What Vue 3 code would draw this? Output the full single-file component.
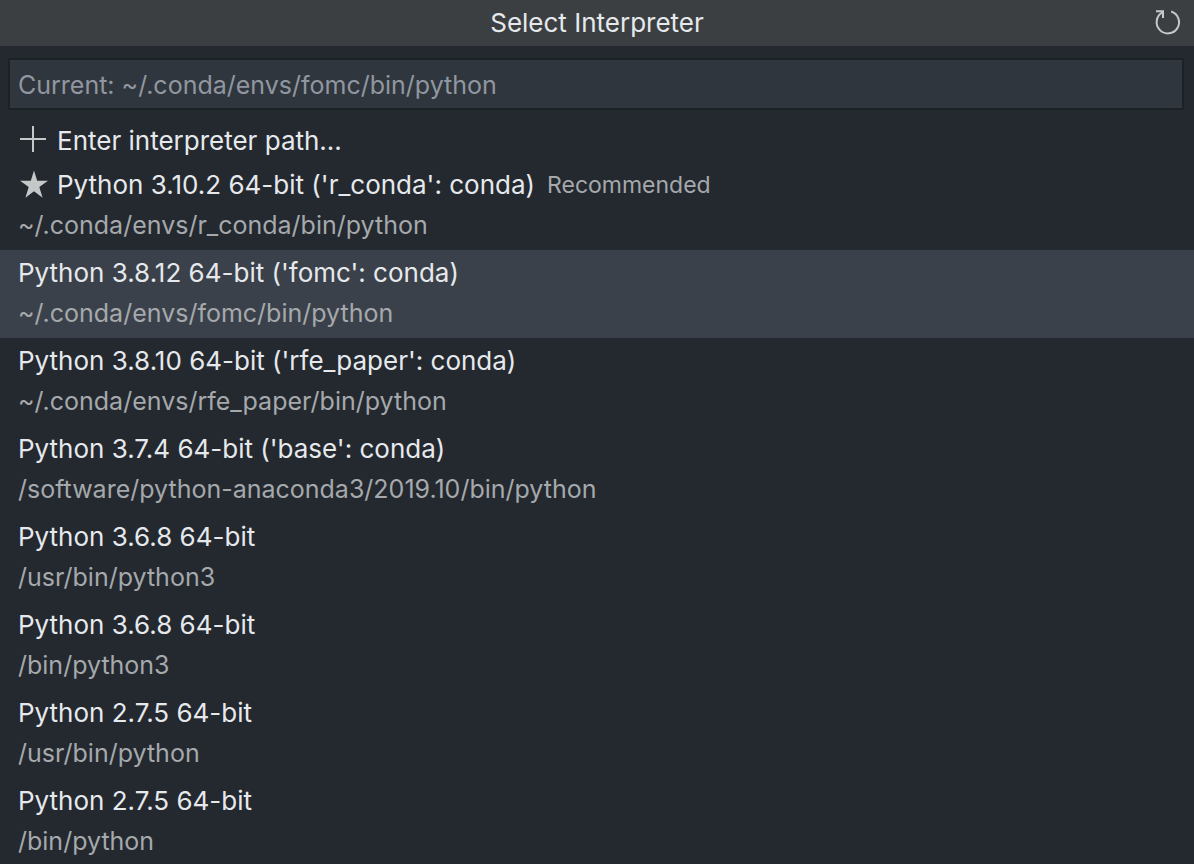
<script setup>
import { ref } from 'vue'

const query = ref('')
const interpreters = [
  { name: "Python 3.10.2 64-bit ('r_conda': conda)", path: '~/.conda/envs/r_conda/bin/python', recommended: true },
  { name: "Python 3.8.12 64-bit ('fomc': conda)", path: '~/.conda/envs/fomc/bin/python' },
  { name: "Python 3.8.10 64-bit ('rfe_paper': conda)", path: '~/.conda/envs/rfe_paper/bin/python' },
  { name: "Python 3.7.4 64-bit ('base': conda)", path: '/software/python-anaconda3/2019.10/bin/python' },
  { name: 'Python 3.6.8 64-bit', path: '/usr/bin/python3' },
  { name: 'Python 3.6.8 64-bit', path: '/bin/python3' },
  { name: 'Python 2.7.5 64-bit', path: '/usr/bin/python' },
  { name: 'Python 2.7.5 64-bit', path: '/bin/python' },
]
const selected = ref(1)
</script>

<template>
  <main class="picker">
    <header class="title-bar">
      <h1 class="title">Select Interpreter</h1>
      <button class="refresh" type="button" aria-label="Refresh">
        <svg width="28" height="28" viewBox="0 0 28 28" fill="none" stroke="#c5c8c9" stroke-width="2">
          <path d="M2 2.2H9V9" />
          <path d="M17.2 2.5A11.2 11.2 0 1 1 8.4 3.4" />
        </svg>
      </button>
    </header>
    <div class="search">
      <input v-model="query" class="field" type="text" aria-label="Interpreter" placeholder="Current: ~/.conda/envs/fomc/bin/python" />
    </div>
    <button class="row enter" type="button">
      <span class="line">
        <svg class="icon" width="30" height="30" viewBox="0 0 30 30" fill="none" stroke="#c5c8c9" stroke-width="2">
          <path d="M15 0V26M2 13H28" />
        </svg>
        <span class="name">Enter interpreter path...</span>
      </span>
    </button>
    <button
      v-for="(item, i) in interpreters"
      :key="i"
      type="button"
      class="row"
      :class="{ selected: i === selected }"
      @click="selected = i"
    >
      <span class="line">
        <svg v-if="item.recommended" class="icon" width="30" height="30" viewBox="0 0 30 30" fill="#c5c8c9">
          <path d="M16 0.5L19.2 10.7H30L21.3 17L24.6 27.7L16 21.2L7.4 27.7L10.7 17L2 10.7H12.8Z" />
        </svg>
        <span class="name">{{ item.name }}</span>
        <span v-if="item.recommended" class="note">Recommended</span>
      </span>
      <span class="path">{{ item.path }}</span>
    </button>
  </main>
</template>

<style>
body {
  margin: 0;
  background: #24282f;
}
</style>

<style scoped>
.picker {
  background: #24282f;
  color: #e6e9ec;
  font: 26px/40px Inter, "Liberation Sans", sans-serif;
}
.title-bar {
  display: grid;
  grid-template-columns: 1fr auto 1fr;
  align-items: center;
  height: 46px;
  padding: 0 12px;
  background: #3b3f42;
}
.title {
  grid-column: 2;
  margin: 0;
  font-size: 26px;
  font-weight: 400;
}
.refresh {
  display: flex;
  justify-self: end;
  padding: 0;
  border: 0;
  background: none;
}
.search {
  padding: 12px 10px 11px 8px;
}
.field {
  display: block;
  box-sizing: border-box;
  width: 100%;
  height: 52px;
  padding: 2px 8px 0;
  border: 2px solid #1c2125;
  outline: 0;
  background: #30363d;
  color: #e6e9ec;
  font: inherit;
  font-size: 25px;
}
.field::placeholder {
  color: #9097a0;
  opacity: 1;
}
.row {
  display: block;
  width: 100%;
  padding: 3px 18px 5px;
  border: 0;
  background: none;
  color: inherit;
  font: inherit;
  text-align: left;
}
.enter {
  padding: 0 18px 1px;
}
.selected {
  background: #3b414a;
}
.line {
  display: flex;
  align-items: center;
  white-space: nowrap;
}
.icon {
  flex: none;
  margin-right: 9px;
}
.note {
  margin-left: 12px;
  color: #a5a9ac;
  font-size: 23px;
}
.path {
  display: block;
  color: #a5a9ac;
  font-size: 25px;
}
</style>
